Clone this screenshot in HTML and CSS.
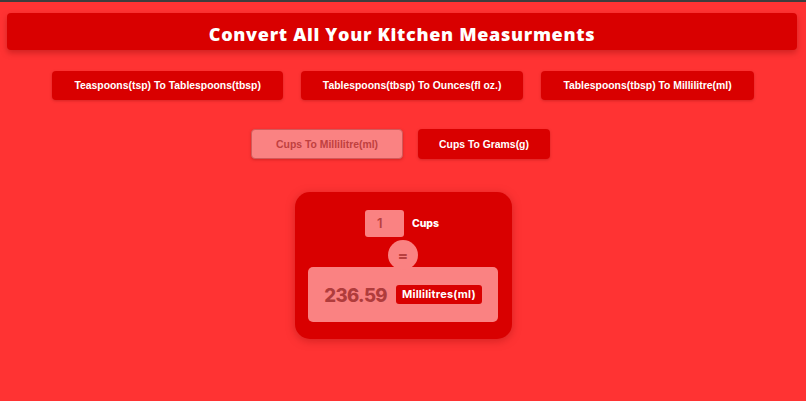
FILE: index.html
```html
<!DOCTYPE html>
<html lang="en">
<head>
<meta charset="utf-8">
<title>Kitchen Measurements</title>
<link rel="stylesheet" href="styles.css">
</head>
<body>
  <header class="banner">
    <h1 class="title">Convert All Your Kitchen Measurments</h1>
  </header>
  <nav class="row row-one">
    <button class="btn">Teaspoons(tsp) To Tablespoons(tbsp)</button>
    <button class="btn">Tablespoons(tbsp) To Ounces(fl oz.)</button>
    <button class="btn">Tablespoons(tbsp) To Millilitre(ml)</button>
  </nav>
  <nav class="row row-two">
    <button class="btn btn-active">Cups To Millilitre(ml)</button>
    <button class="btn btn-tall">Cups To Grams(g)</button>
  </nav>
  <main class="card">
    <div class="input-row">
      <div class="qty">1</div>
      <span class="unit">Cups</span>
    </div>
    <div class="equals">=</div>
    <div class="result">
      <span class="value">236.59</span>
      <span class="badge">Millilitres(ml)</span>
    </div>
  </main>
</body>
</html>
```

FILE: styles.css
```css
html, body {
  margin: 0;
  padding: 0;
}
body {
  background: #ff3333;
  border-top: 2px solid #3d3d3d;
  height: 399px;
  font-family: "Liberation Sans", Arial, sans-serif;
  overflow: hidden;
}
.banner {
  margin: 11px 9px 0 7px;
  height: 37px;
  box-sizing: border-box;
  padding-top: 4px;
  background: #d90000;
  border-radius: 4px;
  box-shadow: 0 3px 6px rgba(120, 0, 0, 0.35);
  display: flex;
  align-items: center;
  justify-content: center;
}
.title {
  margin: 0;
  color: #ffffff;
  font-family: "Open Sans", Inter, sans-serif;
  font-weight: 800;
  font-size: 18px;
  letter-spacing: 0.7px;
}
.row {
  display: flex;
  justify-content: center;
}
.row-one {
  margin-top: 21px;
  gap: 18px;
}
.row-two {
  margin-top: 29px;
  gap: 15px;
  padding-right: 5px;
}
.btn {
  border: 0;
  margin: 0;
  height: 29px;
  padding: 0 22px;
  background: #d90000;
  color: #ffffff;
  font-family: "Liberation Sans", Arial, sans-serif;
  font-weight: 700;
  font-size: 10.4px;
  border-radius: 4px;
  box-shadow: 0 1px 3px rgba(120, 0, 0, 0.3);
}
.btn-tall {
  height: 30px;
  padding: 0 21px;
}
.btn-active {
  height: 30px;
  background: #fa8282;
  color: #c0403f;
  border: 1px solid #d35a5a;
  padding: 0 24px;
}
.card {
  margin: 33px auto 0;
  width: 217px;
  height: 147px;
  box-sizing: border-box;
  padding-top: 18px;
  background: #d90000;
  border-radius: 15px;
  box-shadow: 0 2px 10px rgba(130, 0, 0, 0.35);
  display: flex;
  flex-direction: column;
  align-items: center;
  font-family: Inter, "Open Sans", sans-serif;
}
.input-row {
  display: flex;
  align-items: center;
  gap: 8px;
  margin-right: 2px;
}
.qty {
  width: 39px;
  height: 27px;
  box-sizing: border-box;
  padding-left: 12px;
  background: #fa8282;
  border-radius: 3px;
  color: #b84040;
  font-size: 13px;
  font-weight: 600;
  line-height: 27px;
}
.unit {
  color: #ffffff;
  font-size: 10.5px;
  font-weight: 800;
}
.equals {
  margin-top: 3px;
  width: 30px;
  height: 30px;
  border-radius: 50%;
  background: #fa8282;
  color: #b84040;
  font-size: 15px;
  font-weight: 800;
  display: flex;
  align-items: center;
  justify-content: center;
  margin-bottom: -3px;
  position: relative;
  z-index: 1;
}
.result {
  width: 190px;
  height: 55px;
  background: #fa8282;
  border-radius: 5px;
  display: flex;
  align-items: center;
  justify-content: center;
  gap: 9px;
}
.value {
  color: #b03c3c;
  font-size: 18.5px;
  font-weight: 800;
  letter-spacing: -0.6px;
}
.badge {
  background: #d90000;
  color: #ffffff;
  font-size: 11px;
  font-weight: 700;
  letter-spacing: 0.2px;
  border-radius: 3px;
  padding: 0 6px;
  height: 19px;
  line-height: 19px;
}
```
